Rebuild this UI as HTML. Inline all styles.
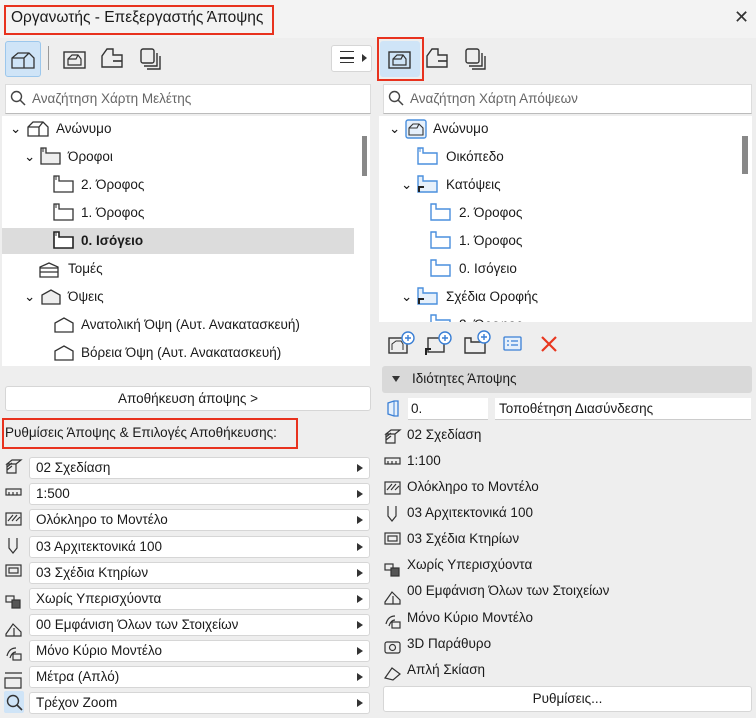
<!DOCTYPE html>
<html><head><meta charset="utf-8"><style>
*{box-sizing:border-box;margin:0;padding:0}
body{width:756px;height:718px;overflow:hidden;background:#eeeeee;font-family:"Segoe UI","Liberation Sans","DejaVu Sans",sans-serif;font-size:13px;color:#1a1a1a;position:relative}
.a{position:absolute}
.title{left:0;top:0;width:756px;height:38px;background:#f3f3f3}
.red{border:2px solid #e8321e}
.tb{background:#fff;border:1px solid #d6d6d6;border-radius:3px}
.search{height:30px;background:#fff;border:1px solid #dcdcdc;border-bottom:1px solid #bbb;color:#666;font-size:13.5px;padding:6px 0 0 26px}
.tree{background:#fff}
.row{position:absolute;height:26px;line-height:26px;font-size:13.5px;white-space:nowrap}
.dd{position:absolute;left:29px;width:341px;height:22px;background:#fff;border:1px solid #d6d6d6;border-radius:3px;padding:2px 0 0 6px;font-size:13.5px}
.dd:after{content:"";position:absolute;right:6px;top:6px;border-left:6px solid #333;border-top:4.5px solid transparent;border-bottom:4.5px solid transparent}
.li{position:absolute;left:407px;font-size:13.5px}
.ic{position:absolute}
</style></head><body>
<div class="a title"></div>
<div class="a red" style="left:4px;top:5px;width:270px;height:30px"></div>
<div class="a" style="left:11px;top:9px;font-size:15.5px">Οργανωτής - Επεξεργαστής Άποψης</div>
<div class="a" style="left:734px;top:7px;font-size:18px;color:#333">✕</div>

<div class="a" style="left:5px;top:41px;width:36px;height:36px;background:#cfe4f7;border:1px solid #9cc7ec;border-radius:3px"></div>
<svg class="ic" style="left:10px;top:50px" width="26" height="20"><path d="M2 18V8L8 3H19L24 8V18ZM2 8H14L19 3M14 8V18M8 3" fill="none" stroke="#333" stroke-width="1.3"/></svg>
<div class="a" style="left:48px;top:46px;width:1px;height:24px;background:#999"></div>
<svg class="ic" style="left:63px;top:50px" width="24" height="20"><rect x="1" y="2" width="21" height="16" fill="none" stroke="#333" stroke-width="1.4"/><path d="M5 15V9L9 5H15L18 9V15ZM5 9H13L15 5" fill="none" stroke="#333" stroke-width="1.2"/></svg>
<svg class="ic" style="left:100px;top:47px" width="24" height="24"><path d="M7 2H13V8H22V20H2V9Z" fill="none" stroke="#333" stroke-width="1.4"/><path d="M13 14H22" stroke="#333" stroke-width="1.6"/></svg>
<svg class="ic" style="left:139px;top:46px" width="24" height="26"><rect x="2" y="3" width="13" height="14" rx="2" fill="none" stroke="#333" stroke-width="1.4"/><path d="M5 20H18V7M8 23H21V10" fill="none" stroke="#333" stroke-width="1.4"/></svg>
<div class="a tb" style="left:331px;top:45px;width:41px;height:27px"></div>
<div class="a" style="left:340px;top:51px;width:14px;height:12px;border-top:1.5px solid #333;border-bottom:1.5px solid #333"></div>
<div class="a" style="left:340px;top:57px;width:14px;height:1.5px;background:#333"></div>
<div class="a" style="left:362px;top:54px;border-left:5px solid #333;border-top:4px solid transparent;border-bottom:4px solid transparent"></div>

<div class="a" style="left:380px;top:41px;width:40px;height:36px;background:#cfe4f7;border-radius:3px"></div>
<div class="a red" style="left:377px;top:37px;width:47px;height:44px"></div>
<svg class="ic" style="left:388px;top:50px" width="24" height="20"><rect x="1" y="2" width="21" height="16" fill="none" stroke="#333" stroke-width="1.4"/><path d="M5 15V9L9 5H15L18 9V15ZM5 9H13L15 5" fill="none" stroke="#333" stroke-width="1.2"/></svg>
<svg class="ic" style="left:425px;top:47px" width="24" height="24"><path d="M7 2H13V8H22V20H2V9Z" fill="none" stroke="#333" stroke-width="1.4"/><path d="M13 14H22" stroke="#333" stroke-width="1.6"/></svg>
<svg class="ic" style="left:464px;top:46px" width="24" height="26"><rect x="2" y="3" width="13" height="14" rx="2" fill="none" stroke="#333" stroke-width="1.4"/><path d="M5 20H18V7M8 23H21V10" fill="none" stroke="#333" stroke-width="1.4"/></svg>

<div class="a search" style="left:5px;top:84px;width:366px">Αναζήτηση Χάρτη Μελέτης</div>
<svg class="ic" style="left:10px;top:90px" width="16" height="16"><circle cx="6.5" cy="6.5" r="5" fill="none" stroke="#444" stroke-width="1.4"/><path d="M10 10L15 15" stroke="#444" stroke-width="1.5"/></svg>
<div class="a search" style="left:383px;top:84px;width:369px">Αναζήτηση Χάρτη Απόψεων</div>
<svg class="ic" style="left:388px;top:90px" width="16" height="16"><circle cx="6.5" cy="6.5" r="5" fill="none" stroke="#444" stroke-width="1.4"/><path d="M10 10L15 15" stroke="#444" stroke-width="1.5"/></svg>

<div class="a tree" style="left:2px;top:116px;width:368px;height:250px"></div>
<div class="a" style="left:362px;top:136px;width:5px;height:40px;background:#888"></div>
<div class="a" style="left:2px;top:228px;width:352px;height:26px;background:#dcdcdc"></div>
<div class="row" style="left:10px;top:116px">⌄</div>
<svg class="ic" style="left:26px;top:120px" width="24" height="18"><path d="M2 16V7L7 2H17L22 7V16ZM2 7H13L17 2M13 7V16" fill="none" stroke="#333" stroke-width="1.3"/></svg>
<div class="row" style="left:56px;top:116px">Ανώνυμο</div>
<div class="row" style="left:24px;top:144px">⌄</div>
<svg class="ic" style="left:40px;top:147px" width="22" height="18"><path d="M1 1H6V6H20V17H1Z" fill="#eee" stroke="#333" stroke-width="1.3"/><path d="M3 1V5" stroke="#333"/></svg>
<div class="row" style="left:68px;top:144px">Όροφοι</div>
<svg class="ic" style="left:53px;top:175px" width="22" height="18"><path d="M1 1H6V6H20V17H1Z" fill="#fff" stroke="#333" stroke-width="1.3"/><path d="M3 1V5" stroke="#333"/></svg>
<div class="row" style="left:81px;top:172px">2. Όροφος</div>
<svg class="ic" style="left:53px;top:203px" width="22" height="18"><path d="M1 1H6V6H20V17H1Z" fill="#fff" stroke="#333" stroke-width="1.3"/><path d="M3 1V5" stroke="#333"/></svg>
<div class="row" style="left:81px;top:200px">1. Όροφος</div>
<svg class="ic" style="left:53px;top:231px" width="22" height="18"><path d="M1 1H6V6H20V17H1Z" fill="#fff" stroke="#222" stroke-width="1.6"/><path d="M3 1V5" stroke="#333"/></svg>
<div class="row" style="left:81px;top:228px;font-weight:bold">0. Ισόγειο</div>
<svg class="ic" style="left:38px;top:261px" width="22" height="18"><path d="M2 16V6L11 2L20 6V16ZM2 7H20M2 11H20" fill="none" stroke="#333" stroke-width="1.3"/></svg>
<div class="row" style="left:68px;top:256px">Τομές</div>
<div class="row" style="left:24px;top:284px">⌄</div>
<svg class="ic" style="left:40px;top:288px" width="22" height="18"><path d="M2 16V7L11 2L20 7V16Z" fill="#eee" stroke="#333" stroke-width="1.3"/></svg>
<div class="row" style="left:68px;top:284px">Όψεις</div>
<svg class="ic" style="left:53px;top:316px" width="22" height="18"><path d="M2 16V7L11 2L20 7V16Z" fill="#fff" stroke="#333" stroke-width="1.3"/></svg>
<div class="row" style="left:81px;top:312px">Ανατολική Όψη (Αυτ. Ανακατασκευή)</div>
<svg class="ic" style="left:53px;top:344px" width="22" height="18"><path d="M2 16V7L11 2L20 7V16Z" fill="#fff" stroke="#333" stroke-width="1.3"/></svg>
<div class="row" style="left:81px;top:340px">Βόρεια Όψη (Αυτ. Ανακατασκευή)</div>

<div class="a tree" style="left:379px;top:116px;width:373px;height:206px;overflow:hidden">
<div class="row" style="left:80px;top:196px">2. Όροφος</div>
<svg class="ic" style="left:51px;top:198px" width="22" height="18"><path d="M1 1H6V6H20V17H1Z" fill="#fff" stroke="#4a8fdd" stroke-width="1.4"/></svg>
</div>
<div class="a" style="left:742px;top:136px;width:6px;height:38px;background:#888"></div>
<div class="row" style="left:389px;top:116px">⌄</div>
<svg class="ic" style="left:405px;top:119px" width="22" height="20"><rect x="1" y="1" width="20" height="18" rx="2" fill="#e6f0fb" stroke="#4a8fdd" stroke-width="1.4"/><path d="M4 16V9L8 5H14L18 9V16ZM4 9H12L14 5" fill="none" stroke="#333" stroke-width="1.1"/></svg>
<div class="row" style="left:433px;top:116px">Ανώνυμο</div>
<svg class="ic" style="left:417px;top:147px" width="22" height="18"><path d="M1 1H6V6H20V17H1Z" fill="#fff" stroke="#4a8fdd" stroke-width="1.4"/><path d="M3 1V5" stroke="#4a8fdd"/></svg>
<div class="row" style="left:446px;top:144px">Οικόπεδο</div>
<div class="row" style="left:401px;top:172px">⌄</div>
<svg class="ic" style="left:417px;top:175px" width="22" height="18"><path d="M1 1H6V6H20V17H1Z" fill="#e6f0fb" stroke="#4a8fdd" stroke-width="1.4"/><path d="M2 17V12H7" fill="none" stroke="#222" stroke-width="2"/></svg>
<div class="row" style="left:446px;top:172px">Κατόψεις</div>
<svg class="ic" style="left:430px;top:203px" width="22" height="18"><path d="M1 1H6V6H20V17H1Z" fill="#fff" stroke="#4a8fdd" stroke-width="1.4"/></svg>
<div class="row" style="left:459px;top:200px">2. Όροφος</div>
<svg class="ic" style="left:430px;top:231px" width="22" height="18"><path d="M1 1H6V6H20V17H1Z" fill="#fff" stroke="#4a8fdd" stroke-width="1.4"/></svg>
<div class="row" style="left:459px;top:228px">1. Όροφος</div>
<svg class="ic" style="left:430px;top:259px" width="22" height="18"><path d="M1 1H6V6H20V17H1Z" fill="#fff" stroke="#4a8fdd" stroke-width="1.4"/></svg>
<div class="row" style="left:459px;top:256px">0. Ισόγειο</div>
<div class="row" style="left:401px;top:284px">⌄</div>
<svg class="ic" style="left:417px;top:287px" width="22" height="18"><path d="M1 1H6V6H20V17H1Z" fill="#e6f0fb" stroke="#4a8fdd" stroke-width="1.4"/><path d="M2 17V12H7" fill="none" stroke="#222" stroke-width="2"/></svg>
<div class="row" style="left:446px;top:284px">Σχέδια Οροφής</div>

<svg class="ic" style="left:387px;top:330px" width="28" height="26"><rect x="2" y="8" width="18" height="15" fill="none" stroke="#333" stroke-width="1.4"/><path d="M5 20V14L9 11H14L16 14V20" fill="none" stroke="#333"/><circle cx="21" cy="8" r="6" fill="#fff" stroke="#3a7fd5" stroke-width="1.4"/><path d="M21 5V11M18 8H24" stroke="#3a7fd5" stroke-width="1.4"/></svg>
<svg class="ic" style="left:424px;top:330px" width="28" height="26"><rect x="4" y="8" width="16" height="14" fill="none" stroke="#333" stroke-width="1.4"/><path d="M2 25V19H7" fill="none" stroke="#222" stroke-width="2"/><circle cx="21" cy="8" r="6" fill="#fff" stroke="#3a7fd5" stroke-width="1.4"/><path d="M21 5V11M18 8H24" stroke="#3a7fd5" stroke-width="1.4"/></svg>
<svg class="ic" style="left:463px;top:330px" width="28" height="26"><path d="M2 8H8V12H22V23H2Z" fill="none" stroke="#333" stroke-width="1.4"/><circle cx="21" cy="7" r="6" fill="#fff" stroke="#3a7fd5" stroke-width="1.4"/><path d="M21 4V10M18 7H24" stroke="#3a7fd5" stroke-width="1.4"/></svg>
<svg class="ic" style="left:503px;top:336px" width="20" height="16"><rect x="1" y="1" width="17" height="13" rx="1" fill="#e6f0fb" stroke="#3a7fd5" stroke-width="1.3"/><path d="M4 5H6M8 5H15M4 9H6M8 9H15" stroke="#3a7fd5" stroke-width="1.3"/></svg>
<svg class="ic" style="left:540px;top:335px" width="18" height="18"><path d="M2 2L16 16M16 2L2 16" stroke="#e8371f" stroke-width="2.2"/></svg>

<div class="a" style="left:382px;top:366px;width:370px;height:27px;background:#d9d9d9;border-radius:3px"></div>
<div class="a" style="left:392px;top:376px;border-top:6px solid #333;border-left:4.5px solid transparent;border-right:4.5px solid transparent"></div>
<div class="a" style="left:412px;top:371px;font-size:13.5px">Ιδιότητες Άποψης</div>
<svg class="ic" style="left:385px;top:400px" width="16" height="18"><path d="M3 3L9 1H13V16H9L3 14Z" fill="#e6f0fb" stroke="#3a7fd5" stroke-width="1.3"/><path d="M9 1V16" stroke="#3a7fd5"/></svg>
<div class="a" style="left:408px;top:398px;width:80px;height:22px;background:#fff;border-bottom:1px solid #ccc;padding:3px 3px;font-size:13.5px">0.</div>
<div class="a" style="left:495px;top:398px;width:256px;height:22px;background:#fff;border-bottom:1px solid #ccc;padding:3px 4px;font-size:13.5px">Τοποθέτηση Διασύνδεσης</div>

<div class="li" style="top:427px">02 Σχεδίαση</div>
<div class="li" style="top:453px">1:100</div>
<div class="li" style="top:479px">Ολόκληρο το Μοντέλο</div>
<div class="li" style="top:505px">03 Αρχιτεκτονικά 100</div>
<div class="li" style="top:531px">03 Σχέδια Κτηρίων</div>
<div class="li" style="top:557px">Χωρίς Υπερισχύοντα</div>
<div class="li" style="top:583px">00 Εμφάνιση Όλων των Στοιχείων</div>
<div class="li" style="top:610px">Μόνο Κύριο Μοντέλο</div>
<div class="li" style="top:636px">3D Παράθυρο</div>
<div class="li" style="top:662px">Απλή Σκίαση</div>
<div class="a tb" style="left:383px;top:686px;width:369px;height:26px;text-align:center;line-height:24px;font-size:13.5px">Ρυθμίσεις...</div>

<svg class="ic" style="left:383px;top:428px" width="20" height="260"><g fill="none" stroke="#333" stroke-width="1.2">
<path d="M3 6L8 2H17L12 6ZM3 9L8 5M3 12L8 8M3 6H12V15H3Z"/>
<rect x="2" y="30" width="15" height="6"/><path d="M5 33V36M9 33V36M13 33V36"/>
<rect x="2" y="54" width="15" height="12"/><path d="M4 62L9 56M8 62L13 56M12 62L16 58"/>
<path d="M5 78V88L9 93L13 88V78"/>
<rect x="2" y="105" width="15" height="11"/><rect x="5" y="108" width="9" height="5"/>
<rect x="2" y="136" width="8" height="6"/><rect x="8" y="140" width="8" height="8" fill="#555"/>
<path d="M2 174L9 164L17 172V176H2ZM10 168V176"/>
<path d="M3 196Q5 188 12 188M6 198Q8 192 12 192"/><rect x="9" y="194" width="8" height="6"/>
<rect x="2" y="214" width="15" height="11" rx="2"/><circle cx="9.5" cy="219.5" r="3"/>
<path d="M2 250L9 240L17 246L10 252Z"/></g></svg>

<div class="a tb" style="left:5px;top:386px;width:366px;height:25px;text-align:center;line-height:23px;font-size:13.5px">Αποθήκευση άποψης &gt;</div>
<div class="a red" style="left:2px;top:418px;width:296px;height:31px"></div>
<div class="a" style="left:5px;top:425px;font-size:13.5px">Ρυθμίσεις Άποψης &amp; Επιλογές Αποθήκευσης:</div>

<div class="dd" style="top:457px">02 Σχεδίαση</div>
<div class="dd" style="top:483px">1:500</div>
<div class="dd" style="top:509px">Ολόκληρο το Μοντέλο</div>
<div class="dd" style="top:536px">03 Αρχιτεκτονικά 100</div>
<div class="dd" style="top:562px">03 Σχέδια Κτηρίων</div>
<div class="dd" style="top:588px">Χωρίς Υπερισχύοντα</div>
<div class="dd" style="top:614px">00 Εμφάνιση Όλων των Στοιχείων</div>
<div class="dd" style="top:640px">Μόνο Κύριο Μοντέλο</div>
<div class="dd" style="top:666px">Μέτρα (Απλό)</div>
<div class="dd" style="top:692px">Τρέχον Zoom</div>

<svg class="ic" style="left:4px;top:458px" width="20" height="260"><g fill="none" stroke="#333" stroke-width="1.2">
<path d="M3 6L8 2H17L12 6ZM3 9L8 5M3 12L8 8M3 6H12V15H3Z"/>
<rect x="2" y="31" width="15" height="6"/><path d="M5 34V37M9 34V37M13 34V37"/>
<rect x="2" y="55" width="15" height="12"/><path d="M4 63L9 57M8 63L13 57M12 63L16 59"/>
<path d="M5 80V90L9 95L13 90V80"/>
<rect x="2" y="107" width="15" height="11"/><rect x="5" y="110" width="9" height="5"/>
<rect x="2" y="138" width="8" height="6"/><rect x="8" y="142" width="8" height="8" fill="#555"/>
<path d="M2 176L9 166L17 174V178H2ZM10 170V178"/>
<path d="M3 198Q5 190 12 190M6 200Q8 194 12 194"/><rect x="9" y="196" width="8" height="6"/>
<path d="M1 215H18M1 220H17V230H1Z"/></g></svg>
<div class="a" style="left:4px;top:691px;width:20px;height:22px;background:#cfe4f7;border-radius:2px"></div>
<svg class="ic" style="left:6px;top:694px" width="18" height="18"><circle cx="7" cy="7" r="5.5" fill="none" stroke="#333" stroke-width="1.4"/><path d="M11 11L16 16" stroke="#333" stroke-width="1.6"/></svg>
</body></html>
